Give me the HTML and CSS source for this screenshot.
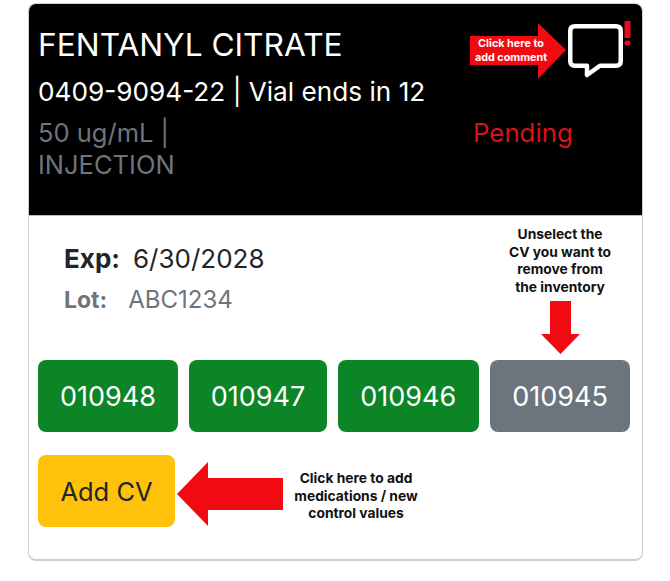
FILE: index.html
```html
<!DOCTYPE html>
<html lang="en">
<head>
<meta charset="utf-8">
<title>Fentanyl Citrate</title>
<link rel="stylesheet" href="styles.css">
</head>
<body>
<main class="card">
  <header class="card-head">
    <h1 class="drug-name">FENTANYL CITRATE</h1>
    <p class="drug-ndc">0409-9094-22 | Vial ends in 12</p>
    <div class="drug-meta">
      <p class="drug-form">50 ug/mL | INJECTION</p>
      <p class="drug-status">Pending</p>
    </div>
  </header>
  <section class="card-body">
    <p class="exp"><b>Exp:</b><span>6/30/2028</span></p>
    <p class="lot"><b>Lot:</b><span>ABC1234</span></p>
    <div class="cv-row">
      <button class="cv cv-on cv-a">010948</button>
      <button class="cv cv-on cv-b">010947</button>
      <button class="cv cv-on cv-c">010946</button>
      <button class="cv cv-off cv-a">010945</button>
    </div>
    <button class="add-cv">Add CV</button>
  </section>

  <svg class="note-arrow comment-arrow" viewBox="0 0 96 56" aria-hidden="true"><polygon points="0,13 68,13 68,0 96,27 68,56 68,42 0,42" fill="#f20a12"/></svg>
  <p class="note note-comment">Click here to<br>add comment</p>
  <svg class="bubble" viewBox="0 0 58 56" aria-hidden="true">
    <path d="M8 2.250H49Q53.750 2.250 53.750 7V37Q53.750 41.750 49 41.750H33L20 51V41.750H8Q3.250 41.750 3.250 37V7Q3.250 2.250 8 2.250Z" fill="#000" stroke="#fff" stroke-width="4.500" stroke-linejoin="round"/>
  </svg>
  <svg class="alert" viewBox="0 0 7 25" aria-hidden="true"><rect x="0.500" y="0" width="6" height="17" fill="#e0101c"/><rect x="0.500" y="19.500" width="6" height="5" rx="2" fill="#e0101c"/></svg>

  <p class="note note-dark note-unselect">Unselect the<br>CV you want to<br>remove from<br>the inventory</p>
  <svg class="note-arrow down-arrow" viewBox="0 0 39 53" aria-hidden="true"><polygon points="9,0 30,0 30,33 39,33 19.500,53 0,33 9,33" fill="#f20a12"/></svg>
  <svg class="note-arrow add-arrow" viewBox="0 0 106 64" aria-hidden="true"><polygon points="0,32 31,0 31,16 106,16 106,48 31,48 31,64" fill="#f20a12"/></svg>
  <p class="note note-dark note-add">Click here to add<br>medications / new<br>control values</p>
</main>
</body>
</html>
```
FILE: styles.css
```css
* { box-sizing: border-box; }
html, body { margin: 0; padding: 0; background: #fff; }
body { font-family: Inter, "Liberation Sans", sans-serif; }
p, h1 { margin: 0; }

.card {
  position: relative;
  width: 615px;
  height: 558px;
  margin: 3px 0 0 28px;
  border: 1px solid #cfcfcf;
  border-bottom-width: 2px;
  border-radius: 8px;
  overflow: hidden;
  background: #fff;
}

.card-head {
  height: 212px;
  padding: 20px 9px 0;
  background: #000;
  color: #fff;
  border-bottom: 1px solid #bbb;
}
.drug-name { font-size: 31.700px; font-weight: 400; line-height: 41px; }
.drug-ndc { font-size: 26.200px; line-height: 31px; margin-top: 11px; }
.drug-meta { display: flex; margin-top: 10px; }
.drug-form { width: 170px; margin-right: 265px; font-size: 25.500px; line-height: 32px; color: #6c757d; }
.drug-status { font-size: 25.800px; line-height: 31px; color: #dc1018; }

.card-body { padding: 25px 9px 0; }
.exp { display: flex; gap: 13px; padding-left: 26px; font-size: 26px; line-height: 36px; color: #212529; }
.exp b { font-weight: 700; }
.lot { display: flex; gap: 21px; padding-left: 26px; margin-top: 6px; font-size: 23px; line-height: 34px; color: #6c757d; }
.lot b { font-weight: 700; }
.lot span { font-size: 24px; }

.cv-row { display: flex; gap: 11px; margin-top: 43px; }
.cv, .add-cv {
  height: 72px;
  border: 0;
  border-radius: 8px;
  font-family: inherit;
  padding: 0;
}
.cv { color: #fff; font-size: 27px; }
.cv-a { width: 140px; }
.cv-b { width: 138px; }
.cv-c { width: 140.500px; }
.cv-on { background: #0c8527; }
.cv-off { background: #6c757d; margin-left: 0.500px; }
.add-cv { display: block; width: 137px; margin-top: 23px; background: #ffc10a; color: #212529; font-size: 25.500px; }

.note { position: absolute; font-weight: 700; text-align: center; }
.note-arrow { position: absolute; display: block; }
.note-comment { left: 441px; top: 33px; width: 82px; font-size: 10.800px; line-height: 14px; color: #fff; }
.note-dark { color: #111; font-size: 13.800px; line-height: 17.600px; }
.note-unselect { left: 466px; top: 222px; width: 130px; }
.note-add { left: 251px; top: 466px; width: 152px; }
.comment-arrow { left: 441px; top: 19px; width: 96px; height: 56px; }
.down-arrow { left: 512px; top: 297px; width: 39px; height: 53px; }
.add-arrow { left: 148px; top: 458px; width: 106px; height: 64px; }
.bubble { position: absolute; left: 538px; top: 20px; width: 58px; height: 56px; }
.alert { position: absolute; left: 595px; top: 17px; width: 7px; height: 25px; }
```
